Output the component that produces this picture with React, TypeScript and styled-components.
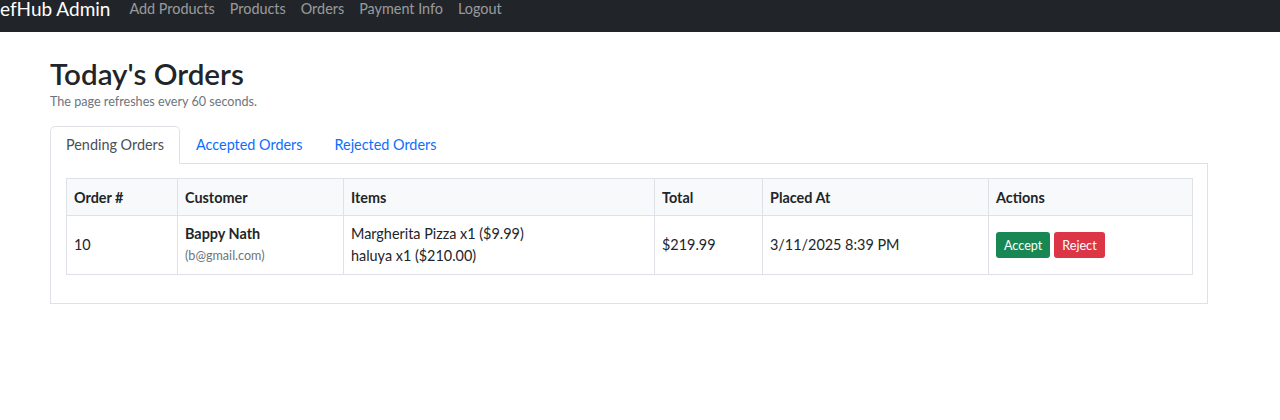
import styled, { createGlobalStyle } from "styled-components";
import { useState } from "react";

const GlobalStyle = createGlobalStyle`
  body {
    margin: 0;
    background: #ffffff;
    font-family: "Segoe UI", Lato, "Noto Sans", sans-serif;
    color: #212529;
  }
`;

const Navbar = styled.nav`
  height: 32px;
  background-color: #212529;
  display: flex;
  align-items: flex-start;
  overflow: hidden;
`;

const Brand = styled.span`
  color: #ffffff;
  font-size: 19px;
  line-height: 17px;
  margin-right: 19px;
`;

const NavLinks = styled.div`
  display: flex;
  gap: 15px;
  padding-top: 1px;
`;

const NavLink = styled.a`
  color: rgba(255, 255, 255, 0.55);
  font-size: 14.4px;
  line-height: 16px;
  text-decoration: none;
  cursor: pointer;
`;

const Container = styled.main`
  width: 1158px;
  padding: 24px 0 0 50px;
`;

const Title = styled.h2`
  margin: 0;
  font-size: 29.6px;
  font-weight: 600;
  line-height: 1.2;
`;

const Subtitle = styled.p`
  margin: 2px 0 17px;
  font-size: 12.6px;
  color: #6c757d;
`;

const Tabs = styled.ul`
  display: flex;
  list-style: none;
  margin: 0;
  padding: 0;
  border-bottom: 1px solid #dee2e6;
`;

const Tab = styled.li<{ $active: boolean }>`
  margin-bottom: -1px;
  padding: 9px 15px;
  font-size: 14.4px;
  line-height: 1.3;
  cursor: pointer;
  border: 1px solid ${(p) => (p.$active ? "#dee2e6" : "transparent")};
  border-bottom-color: ${(p) => (p.$active ? "#ffffff" : "transparent")};
  border-radius: 5px 5px 0 0;
  background: ${(p) => (p.$active ? "#ffffff" : "transparent")};
  color: ${(p) => (p.$active ? "#495057" : "#0d6efd")};
`;

const TabPanel = styled.section`
  border: 1px solid #dee2e6;
  border-top: none;
  padding: 14px 15px 28px;
`;

const Table = styled.table`
  width: 100%;
  border-collapse: collapse;
  table-layout: fixed;
  font-size: 14.4px;
`;

const HeadCell = styled.th`
  background-color: #f8f9fa;
  text-align: left;
  font-weight: 700;
  padding: 8px 7px;
  height: 20px;
  border: 1px solid #dee2e6;
`;

const Cell = styled.td`
  padding: 7px 7px;
  vertical-align: middle;
  line-height: 22px;
  border: 1px solid #dee2e6;
`;

const CustomerName = styled.div`
  font-weight: 700;
`;

const Email = styled.div`
  font-size: 12.6px;
  color: #6c757d;
`;

const ActionButton = styled.button<{ $variant: "accept" | "reject" }>`
  font-family: inherit;
  font-size: 12.6px;
  height: 26px;
  padding: 0 8px;
  margin-right: 4px;
  border: none;
  border-radius: 3px;
  color: #ffffff;
  cursor: pointer;
  background-color: ${(p) => (p.$variant === "accept" ? "#198754" : "#dc3545")};
`;

const columns = [
  { label: "Order #", width: 111 },
  { label: "Customer", width: 166 },
  { label: "Items", width: 311 },
  { label: "Total", width: 108 },
  { label: "Placed At", width: 226 },
  { label: "Actions", width: 204 },
];

const tabs = ["Pending Orders", "Accepted Orders", "Rejected Orders"];

export default function App() {
  const [activeTab, setActiveTab] = useState(0);

  return (
    <>
      <GlobalStyle />
      <Navbar>
        <Brand>efHub Admin</Brand>
        <NavLinks>
          {["Add Products", "Products", "Orders", "Payment Info", "Logout"].map((l) => (
            <NavLink key={l}>{l}</NavLink>
          ))}
        </NavLinks>
      </Navbar>
      <Container>
        <Title>Today's Orders</Title>
        <Subtitle>The page refreshes every 60 seconds.</Subtitle>
        <Tabs>
          {tabs.map((t, i) => (
            <Tab key={t} $active={i === activeTab} onClick={() => setActiveTab(i)}>
              {t}
            </Tab>
          ))}
        </Tabs>
        <TabPanel>
          <Table>
            <colgroup>
              {columns.map((c) => (
                <col key={c.label} style={{ width: c.width }} />
              ))}
            </colgroup>
            <thead>
              <tr>
                {columns.map((c) => (
                  <HeadCell key={c.label}>{c.label}</HeadCell>
                ))}
              </tr>
            </thead>
            <tbody>
              <tr>
                <Cell>10</Cell>
                <Cell>
                  <CustomerName>Bappy Nath</CustomerName>
                  <Email>(b@gmail.com)</Email>
                </Cell>
                <Cell>
                  <div>Margherita Pizza x1 ($9.99)</div>
                  <div>haluya x1 ($210.00)</div>
                </Cell>
                <Cell>$219.99</Cell>
                <Cell>3/11/2025 8:39 PM</Cell>
                <Cell>
                  <ActionButton $variant="accept">Accept</ActionButton>
                  <ActionButton $variant="reject">Reject</ActionButton>
                </Cell>
              </tr>
            </tbody>
          </Table>
        </TabPanel>
      </Container>
    </>
  );
}
